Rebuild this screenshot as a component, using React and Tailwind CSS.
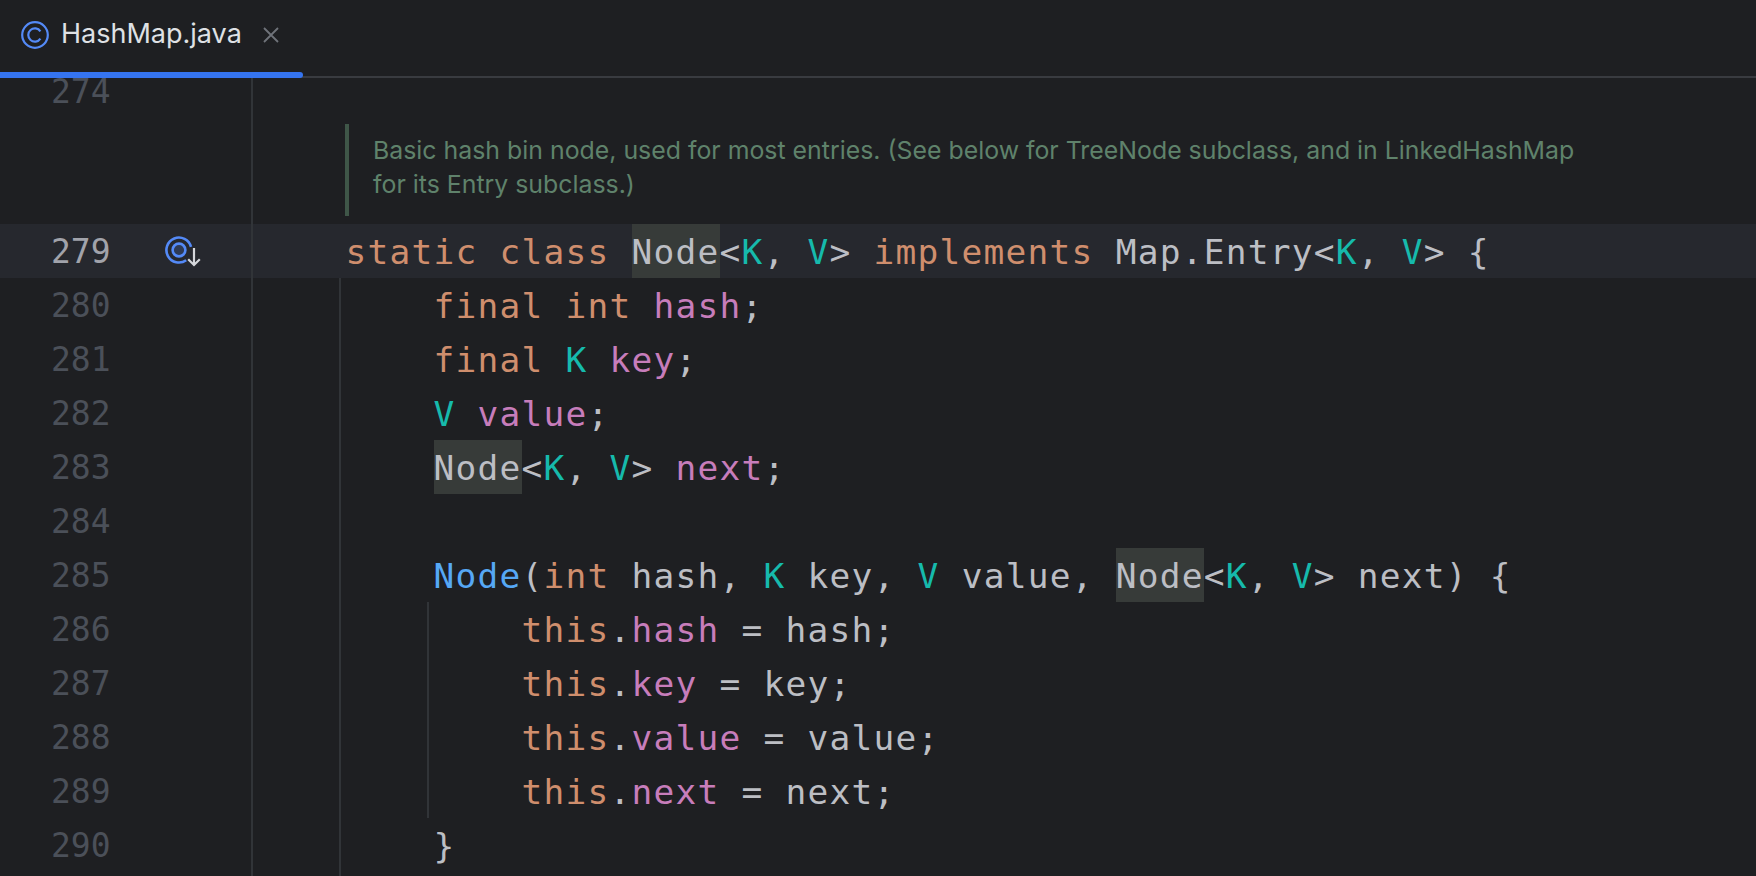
import React from "react";

const kw = "text-[#cf8e6d]";
const fld = "text-[#c77dbb]";
const tp = "text-[#16baac]";
const fn = "text-[#56a8f5]";

// [text, colour class, highlighted]
const code = [
  { n: 279, indent: 0, current: true, t: [["static class ", kw], ["Node", "", true], ["<"], ["K", tp], [", "], ["V", tp], ["> "], ["implements ", kw], ["Map.Entry<"], ["K", tp], [", "], ["V", tp], ["> {"]] },
  { n: 280, indent: 4, t: [["final int ", kw], ["hash", fld], [";"]] },
  { n: 281, indent: 4, t: [["final ", kw], ["K ", tp], ["key", fld], [";"]] },
  { n: 282, indent: 4, t: [["V ", tp], ["value", fld], [";"]] },
  { n: 283, indent: 4, t: [["Node", "", true], ["<"], ["K", tp], [", "], ["V", tp], ["> "], ["next", fld], [";"]] },
  { n: 284, indent: 0, t: [] },
  { n: 285, indent: 4, t: [["Node", fn], ["("], ["int ", kw], ["hash, "], ["K ", tp], ["key, "], ["V ", tp], ["value, "], ["Node", "", true], ["<"], ["K", tp], [", "], ["V", tp], ["> next) {"]] },
  { n: 286, indent: 8, t: [["this", kw], ["."], ["hash", fld], [" = hash;"]] },
  { n: 287, indent: 8, t: [["this", kw], ["."], ["key", fld], [" = key;"]] },
  { n: 288, indent: 8, t: [["this", kw], ["."], ["value", fld], [" = value;"]] },
  { n: 289, indent: 8, t: [["this", kw], ["."], ["next", fld], [" = next;"]] },
  { n: 290, indent: 4, t: [["}"]] },
];

const ClassIcon = () => (
  <svg width="28" height="28" viewBox="0 0 28 28" fill="none" stroke="#548af7">
    <circle cx="14" cy="14" r="12.8" strokeWidth="2.2" />
    <path d="M19.4 10.4a6.6 6.6 0 1 0 0 7.2" strokeWidth="2.2" />
  </svg>
);

const ImplementedIcon = () => (
  <svg className="-mt-[1px]" width="36" height="34" viewBox="0 0 36 34" fill="none">
    <path d="M26 12.8A12.5 12.5 0 1 0 21.2 26.2" stroke="#548af7" strokeWidth="2.6" />
    <circle cx="14" cy="16" r="6.4" fill="#2e3a55" stroke="#548af7" strokeWidth="2.6" />
    <path d="M29 14v17M23.2 25.2l5.8 5.8 5.8-5.8" stroke="#d5d7db" strokeWidth="2.2" />
  </svg>
);

const Row = ({ line }) => (
  <div className={`flex h-[54px] shrink-0 ${line.current ? "bg-[#26282e]" : ""}`}>
    <div className={`flex w-[251px] shrink-0 items-center pl-[51px] pt-[1px] text-[33px] leading-[54px] ${line.current ? "text-[#a1a3ab]" : "text-[#4b5059]"}`}>
      <span className="w-[114px]">{line.n}</span>
      {line.current && <ImplementedIcon />}
    </div>
    <div className="w-[2px] shrink-0 bg-[#313438]" />
    <div className="pl-[92.5px] pt-[1px] whitespace-pre text-[34.5px] leading-[54px] tracking-[1.23px] text-[#bcbec4]">
      <span>{" ".repeat(line.indent)}</span>
      {line.t.map(([text, color, hl], i) => (
        <span key={i} className={`${color || ""} ${hl ? "inline-block -mt-[1px] h-[54px] bg-[#373b39] pt-[1px]" : ""}`}>{text}</span>
      ))}
    </div>
  </div>
);

export default function App() {
  return (
    <div className="flex h-[876px] w-[1756px] flex-col overflow-hidden bg-[#1e1f22] font-['DejaVu_Sans_Mono',monospace]">
      {/* tab strip */}
      <div className="relative h-[78px] shrink-0 border-b-2 border-[#393b40]">
        <div className="flex h-full items-center pb-[7px] pl-[21px]">
          <ClassIcon />
          <span className="ml-[12px] font-['Inter',sans-serif] text-[27px] text-[#dfe1e5]">HashMap.java</span>
          <svg className="ml-[21px]" width="16" height="16" viewBox="0 0 16 16" stroke="#6f737a" strokeWidth="1.8">
            <path d="M1 1l14 14M15 1L1 15" />
          </svg>
        </div>
        <div className="absolute bottom-[-2px] left-0 h-[6px] w-[303px] rounded-r-full bg-[#3574f0]" />
      </div>

      {/* line 274, cut by the tab strip */}
      <div className="h-[40px] shrink-0 overflow-hidden">
        <div className="-mt-[14px] flex h-[54px]">
          <div className="w-[251px] shrink-0 pl-[51px] pt-[1px] text-[33px] leading-[54px] text-[#4b5059]">274</div>
          <div className="w-[2px] shrink-0 bg-[#313438]" />
        </div>
      </div>

      {/* rendered doc comment */}
      <div className="flex h-[106px] shrink-0">
        <div className="w-[251px] shrink-0" />
        <div className="w-[2px] shrink-0 bg-[#313438]" />
        <div className="ml-[92px] mt-[6px] h-[92px] border-l-4 border-[#3f5648] pl-[24px] pt-[9px] font-['Inter',sans-serif] text-[24.86px] leading-[34px] text-[#5f826b]">
          <div>Basic hash bin node, used for most entries. (See below for TreeNode subclass, and in LinkedHashMap</div>
          <div>for its Entry subclass.)</div>
        </div>
      </div>

      {/* code */}
      <div className="relative flex min-h-0 flex-1 flex-col">
        {code.map((line) => (
          <Row key={line.n} line={line} />
        ))}
        <div className="flex-1">
          <div className="ml-[251px] h-full w-[2px] bg-[#313438]" />
        </div>
        <div className="absolute bottom-0 left-[339px] top-[54px] w-[2px] bg-[#313438]" />
        <div className="absolute left-[427px] top-[378px] h-[216px] w-[2px] bg-[#313438]" />
      </div>
    </div>
  );
}
